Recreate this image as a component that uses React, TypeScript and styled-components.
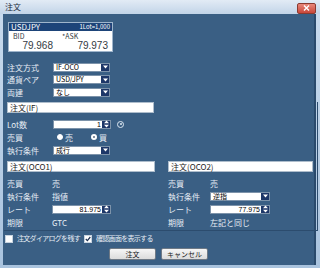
import React from 'react';
import styled, { createGlobalStyle } from 'styled-components';

const GlobalStyle = createGlobalStyle`
  html, body {
    margin: 0;
    padding: 0;
    background: #b4cce4;
  }
  body {
    font-family: 'Noto Sans CJK JP', 'Liberation Sans', sans-serif;
    font-size: 8px;
    -webkit-font-smoothing: antialiased;
  }
`;

function SelectBox({ value, width }: { value: string; width: number }) {
  return (
    <Select $width={width}>
      <SelectValue>{value}</SelectValue>
      <ArrowButton>
        <svg width="5" height="4" viewBox="0 0 5 4">
          <path d="M0 0.5 L5 0.5 L2.5 3.5 Z" fill="#ffffff" />
        </svg>
      </ArrowButton>
    </Select>
  );
}

function Spinner({ value, width }: { value: string; width: number }) {
  return (
    <Select $width={width}>
      <SpinValue>{value}</SpinValue>
      <ArrowButton>
        <svg width="5" height="8" viewBox="0 0 5 8">
          <path d="M0 3.3 L5 3.3 L2.5 0.5 Z" fill="#ffffff" />
          <path d="M0 4.7 L5 4.7 L2.5 7.5 Z" fill="#ffffff" />
        </svg>
      </ArrowButton>
    </Select>
  );
}

export default function App(): React.ReactElement {
  return (
    <>
      <GlobalStyle />
      <Window>
        <TitleBar>
          <Title>注文</Title>
          <CloseButton>
            <svg width="7" height="6" viewBox="0 0 7 6">
              <path d="M1 0.5 L6 5.5 M6 0.5 L1 5.5" stroke="#ffffff" strokeWidth="1.4" />
            </svg>
          </CloseButton>
        </TitleBar>
        <Body>
          <QuoteBox>
            <QuoteHeader>
              <span>USDJPY</span>
              <LotInfo>1Lot=1,000</LotInfo>
            </QuoteHeader>
            <QuoteBody>
              <PriceCol $pad={9}>
                <PriceLabel>BID</PriceLabel>
                <Price>79.968</Price>
              </PriceCol>
              <PriceCol $pad={1}>
                <PriceLabel>*ASK</PriceLabel>
                <Price>79.973</Price>
              </PriceCol>
            </QuoteBody>
          </QuoteBox>

          <TopForm>
            <Row $label={46} $height={12.5}>
              <Label>注文方式</Label>
              <SelectBox value="IF-OCO" width={57} />
            </Row>
            <Row $label={46} $height={12.5}>
              <Label>通貨ペア</Label>
              <SelectBox value="USD/JPY" width={57} />
            </Row>
            <Row $label={46} $height={12.5}>
              <Label>両建</Label>
              <SelectBox value="なし" width={57} />
            </Row>
          </TopForm>

          <Frame>
            <Section $width={147}>
              <SectionHeader>注文(IF)</SectionHeader>
              <Rows>
                <Row $label={46} $height={13}>
                  <Label>Lot数</Label>
                  <Inline>
                    <Spinner value="1" width={58} />
                    <InfoDot />
                  </Inline>
                </Row>
                <Row $label={46} $height={13}>
                  <Label>売買</Label>
                  <Inline>
                    <RadioItem>
                      <Radio $checked={false} />
                      売
                    </RadioItem>
                    <RadioItem>
                      <Radio $checked />
                      買
                    </RadioItem>
                  </Inline>
                </Row>
                <Row $label={46} $height={13}>
                  <Label>執行条件</Label>
                  <SelectBox value="成行" width={57} />
                </Row>
              </Rows>
            </Section>

            <Columns>
              <Section $width={148}>
                <SectionHeader>注文(OCO1)</SectionHeader>
                <Rows>
                  <Row $label={45} $height={13}>
                    <Label>売買</Label>
                    <Value>売</Value>
                  </Row>
                  <Row $label={45} $height={13}>
                    <Label>執行条件</Label>
                    <Value>指値</Value>
                  </Row>
                  <Row $label={45} $height={13}>
                    <Label>レート</Label>
                    <Spinner value="81.975" width={59} />
                  </Row>
                  <Row $label={45} $height={13}>
                    <Label>期限</Label>
                    <Value>GTC</Value>
                  </Row>
                </Rows>
              </Section>
              <Section $width={145}>
                <SectionHeader>注文(OCO2)</SectionHeader>
                <Rows>
                  <Row $label={42} $height={13}>
                    <Label>売買</Label>
                    <Value>売</Value>
                  </Row>
                  <Row $label={42} $height={13}>
                    <Label>執行条件</Label>
                    <SelectBox value="逆指" width={60} />
                  </Row>
                  <Row $label={42} $height={13}>
                    <Label>レート</Label>
                    <Spinner value="77.975" width={60} />
                  </Row>
                  <Row $label={42} $height={13}>
                    <Label>期限</Label>
                    <Value>左記と同じ</Value>
                  </Row>
                </Rows>
              </Section>
            </Columns>
          </Frame>

          <CheckRow>
            <CheckItem>
              <CheckBox />
              注文ダイアログを残す
            </CheckItem>
            <CheckItem>
              <CheckBox>
                <svg width="6" height="6" viewBox="0 0 6 6">
                  <path d="M0.8 3 L2.4 4.6 L5.3 1" stroke="#1d2f50" strokeWidth="1.2" fill="none" />
                </svg>
              </CheckBox>
              確認画面を表示する
            </CheckItem>
          </CheckRow>

          <ButtonRow>
            <Button>注文</Button>
            <Button>キャンセル</Button>
          </ButtonRow>
        </Body>
      </Window>
    </>
  );
}

const Window = styled.div`
  width: 320px;
  height: 268px;
  display: flex;
  flex-direction: column;
  background: linear-gradient(#c9dbee, #a9c3de);
  box-sizing: border-box;
  padding: 0 4px 3px 3px;
  overflow: hidden;
`;

const TitleBar = styled.div`
  height: 14px;
  flex: 0 0 14px;
  display: flex;
  align-items: center;
  justify-content: space-between;
  background: linear-gradient(#e2ebf5, #c2d4e8);
  margin: 0 -4px 0 -3px;
  padding: 0 4px 0 5px;
`;

const Title = styled.span`
  color: #1a2a3a;
  font-size: 8px;
  line-height: 10px;
`;

const CloseButton = styled.div`
  width: 17px;
  height: 9px;
  margin-top: 2px;
  border-radius: 2px;
  border: 1px solid #8a3a30;
  background: linear-gradient(#e8877a, #c9473a);
  display: flex;
  align-items: center;
  justify-content: center;
`;

const Body = styled.div`
  flex: 1;
  display: flex;
  flex-direction: column;
  background: #3a5f84;
  border-right: 2px solid #2a4a6c;
  padding: 8px 0 0 4px;
  color: #e6edf5;
`;

const QuoteBox = styled.div`
  width: 103px;
  margin-left: 1px;
  border: 1px solid #9fb5cc;
  background: #ffffff;
`;

const QuoteHeader = styled.div`
  height: 8px;
  display: flex;
  align-items: center;
  justify-content: space-between;
  padding: 0 2px;
  background: #1d4479;
  color: #ffffff;
  font-size: 8px;
  line-height: 8px;
`;

const LotInfo = styled.span`
  font-size: 6px;
`;

const QuoteBody = styled.div`
  height: 20px;
  display: grid;
  grid-template-columns: 49px 1fr;
  padding: 0 3px 0 4px;
  color: #333b44;
`;

const PriceCol = styled.div<{ $pad: number }>`
  display: flex;
  flex-direction: column;
  padding-right: ${(p) => p.$pad}px;
`;

const PriceLabel = styled.span`
  font-size: 7px;
  line-height: 9px;
  padding-top: 1px;
`;

const Price = styled.span`
  font-family: 'Liberation Sans', sans-serif;
  font-size: 10px;
  line-height: 10px;
  text-align: right;
`;

const TopForm = styled.div`
  margin-top: 9px;
`;

const Row = styled.div<{ $label: number; $height: number }>`
  display: grid;
  grid-template-columns: ${(p) => p.$label}px auto;
  align-items: center;
  height: ${(p) => p.$height}px;
`;

const Label = styled.span`
  font-size: 8px;
  line-height: 9px;
  color: #e6edf5;
`;

const Value = styled.span`
  font-size: 8px;
  line-height: 9px;
  color: #e6edf5;
`;

const Select = styled.div<{ $width: number }>`
  width: ${(p) => p.$width}px;
  height: 9px;
  display: flex;
  background: #ffffff;
  border: 1px solid #7d93aa;
  box-sizing: border-box;
`;

const SelectValue = styled.span`
  flex: 1;
  padding-left: 2px;
  color: #000000;
  font-size: 7px;
  line-height: 7px;
`;

const SpinValue = styled(SelectValue)`
  text-align: right;
  padding: 0 1px 0 0;
  font-family: 'Liberation Sans', sans-serif;
`;

const ArrowButton = styled.div`
  width: 8px;
  background: #1d3768;
  display: flex;
  align-items: center;
  justify-content: center;
`;

const Inline = styled.div`
  display: flex;
  align-items: center;
  gap: 6px;
`;

const InfoDot = styled.div`
  width: 5px;
  height: 5px;
  border-radius: 50%;
  border: 1px solid #dce7f2;
  position: relative;
  &::after {
    content: '';
    position: absolute;
    left: 1.5px;
    top: 1.5px;
    width: 2px;
    height: 2px;
    border-radius: 50%;
    background: #dce7f2;
  }
`;

const RadioItem = styled.span`
  display: flex;
  align-items: center;
  gap: 2px;
  width: 24px;
  margin-left: 4px;
  font-size: 8px;
  line-height: 9px;
`;

const Radio = styled.span<{ $checked: boolean }>`
  width: 6px;
  height: 6px;
  border-radius: 50%;
  background: #ffffff;
  box-sizing: border-box;
  border: ${(p) => (p.$checked ? '2px solid #ffffff' : '1px solid #ffffff')};
  box-shadow: ${(p) => (p.$checked ? 'inset 0 0 0 1px #2a3e5a' : 'none')};
`;

const Frame = styled.div`
  margin: 3px 0 0 -3px;
  width: 310px;
  padding: 0 0 1px 3px;
  border-right: 1px solid #2c4c6e;
  border-bottom: 1px solid #2c4c6e;
`;

const Section = styled.div<{ $width: number }>`
  width: ${(p) => p.$width}px;
`;

const SectionHeader = styled.div`
  height: 11px;
  box-sizing: border-box;
  background: #ffffff;
  border: 1px solid #aebdcc;
  color: #1a1a1a;
  font-size: 8px;
  line-height: 9px;
  padding-left: 2px;
`;

const Rows = styled.div`
  margin-top: 5px;
`;

const Columns = styled.div`
  display: flex;
  gap: 13px;
  margin-top: 4px;
`;

const CheckRow = styled.div`
  display: flex;
  align-items: center;
  gap: 4px;
  margin: 3px 0 0 -2px;
  height: 10px;
`;

const CheckItem = styled.span`
  display: flex;
  align-items: center;
  gap: 4px;
  font-size: 7px;
  letter-spacing: -0.7px;
  line-height: 9px;
  color: #e6edf5;
`;

const CheckBox = styled.span`
  width: 6px;
  height: 6px;
  background: #ffffff;
  border: 1px solid #c8d4e0;
  display: flex;
  align-items: center;
  justify-content: center;
`;

const ButtonRow = styled.div`
  display: flex;
  justify-content: center;
  gap: 5px;
  margin-top: 4px;
  padding-right: 4px;
`;

const Button = styled.div`
  width: 47px;
  height: 12px;
  box-sizing: border-box;
  border: 1px solid #6f7a86;
  border-radius: 2px;
  background: linear-gradient(#f6f6f6, #dcdcdc);
  color: #1a1a1a;
  font-size: 7px;
  line-height: 10px;
  text-align: center;
`;
